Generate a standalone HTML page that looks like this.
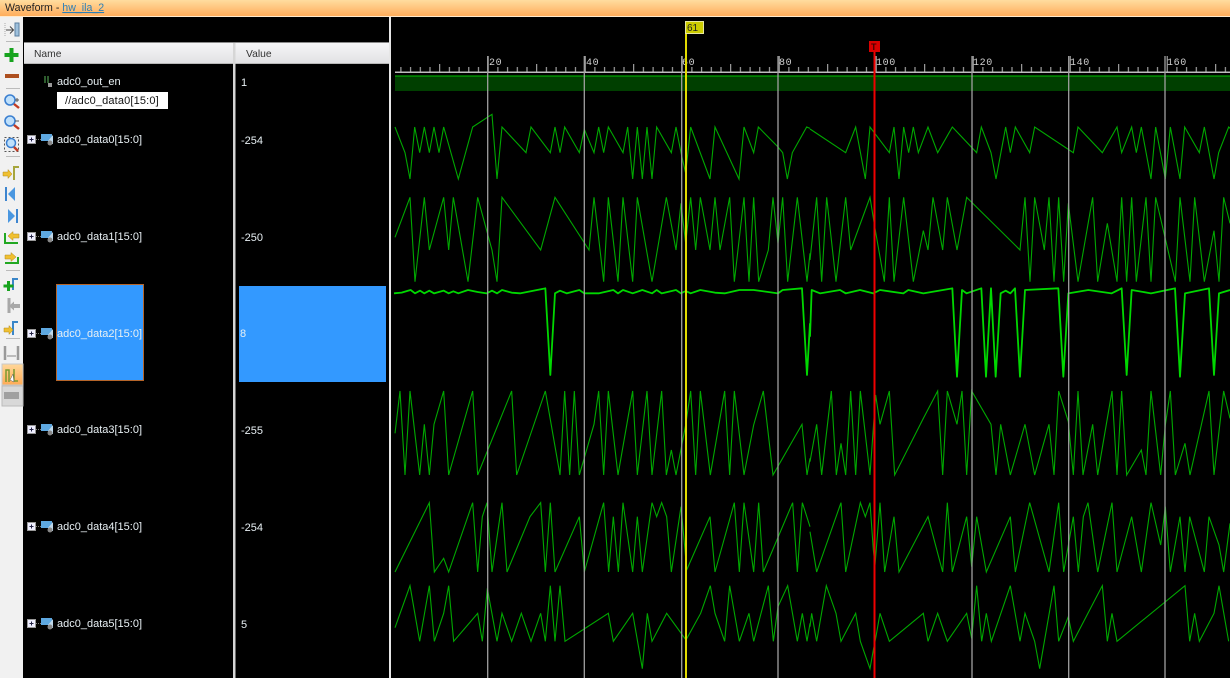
<!DOCTYPE html>
<html><head><meta charset="utf-8"><title>Waveform</title>
<style>
html,body{margin:0;padding:0;background:#000;width:1230px;height:678px;overflow:hidden}
svg{display:block}
text{font-family:"Liberation Sans",sans-serif;font-size:11px;fill:#e8f0f4}
.w polyline{fill:none;stroke:#00a800;stroke-width:1.1;vector-effect:non-scaling-stroke;stroke-linejoin:miter}
.t polyline{fill:none;stroke:#00d800;stroke-width:1.8;vector-effect:non-scaling-stroke;stroke-linejoin:round}
.r text{font-family:"Liberation Mono",monospace;font-size:10px;fill:#d0d0d0;letter-spacing:.6px}
.g{stroke:#a0a0a0;stroke-width:1.3}
</style></head><body>
<svg width="1230" height="678" viewBox="0 0 1230 678" xmlns="http://www.w3.org/2000/svg">
<defs>
<linearGradient id="tb" x1="0" y1="0" x2="0" y2="1"><stop offset="0" stop-color="#ffdc9f"/><stop offset="1" stop-color="#ffad5c"/></linearGradient>
<linearGradient id="hd" x1="0" y1="0" x2="0" y2="1"><stop offset="0" stop-color="#f6f6f8"/><stop offset="1" stop-color="#e2e2e4"/></linearGradient>
<linearGradient id="ac" x1="0" y1="0" x2="0" y2="1"><stop offset="0" stop-color="#ffd79a"/><stop offset="1" stop-color="#ffab55"/></linearGradient>
<pattern id="tk" patternUnits="userSpaceOnUse" x="487.7" y="56" width="97" height="17">
<path d="M.5 0V17M10.2 11V17M19.9 11V17M29.6 11V17M39.3 11V17M49 8V17M58.7 11V17M68.4 11V17M78.1 11V17M87.8 11V17" stroke="#bdbdbd" stroke-width="1" fill="none"/>
</pattern>
</defs>
<rect width="1230" height="678" fill="#000"/>

<!-- title -->
<rect width="1230" height="16" fill="url(#tb)"/>
<rect y="16" width="1230" height="1" fill="#ffe9cc"/>
<text x="5" y="11" style="fill:#222;font-size:10.6px">Waveform - <tspan style="fill:#2a7fb8" text-decoration="underline">hw_ila_2</tspan></text>

<!-- left toolbar -->
<rect y="17" width="23" height="661" fill="#f1f1f1"/>
<g>
<rect x="15" y="23" width="4" height="13" fill="#9ec0dc" stroke="#5c7fa0"/>
<path d="M6 30h7M10 26.500l3.500 3.500-3.500 3.500" stroke="#444" fill="none"/>
<path d="M5 23v13" stroke="#aaa" stroke-dasharray="1 1"/>
<rect x="6" y="41" width="14" height="1" fill="#bbb"/>
<path d="M9.500 48h4v5h5v4h-5v5h-4v-5h-5v-4h5z" fill="#17a31e"/>
<rect x="5" y="74" width="14" height="4" fill="#ad4f1f"/>
<rect x="6" y="88" width="14" height="1" fill="#bbb"/>
<circle cx="10" cy="100" r="5" fill="#bfe0fb" stroke="#3b7fd0" stroke-width="1.600"/><path d="M14 104l5 4" stroke="#c23a22" stroke-width="2.400"/>
<path d="M15 100h4M17 98v4" stroke="#555"/>
<circle cx="10" cy="121" r="5" fill="#bfe0fb" stroke="#3b7fd0" stroke-width="1.600"/><path d="M14 125l5 4" stroke="#c23a22" stroke-width="2.400"/><path d="M15 121h4" stroke="#555"/>
<rect x="4.500" y="137.500" width="14" height="14" fill="#eee" stroke="#555" stroke-dasharray="2 2"/>
<circle cx="11" cy="143" r="4.500" fill="#bfe0fb" stroke="#3b7fd0" stroke-width="1.500"/><path d="M14 147l4 4" stroke="#c23a22" stroke-width="2.400"/>
<rect x="6" y="156" width="14" height="1" fill="#bbb"/>
<path d="M14 180v-13h5" stroke="#a6a53c" stroke-width="2" fill="none"/><path d="M3 172h5v-2.500l4 4.500-4 4.500v-2.500h-5z" fill="#f0c030" stroke="#b08a20" stroke-width=".5"/>
<rect x="5" y="187" width="2" height="14" fill="#3d85cf"/><path d="M15 187v14l-7-7z" fill="#4a97e0"/>
<rect x="16" y="209" width="2" height="14" fill="#3d85cf"/><path d="M8 209v14l7-7z" fill="#4a97e0"/>
<path d="M5 233v10h13" stroke="#22a822" stroke-width="2" fill="none"/><path d="M19 234h-6v-2.500l-5 4.500 5 4.500v-2.500h6z" fill="#f0c030" stroke="#b08a20" stroke-width=".5"/>
<path d="M5 263h13v-6" stroke="#22a822" stroke-width="2" fill="none"/><path d="M5 255h6v-2.500l5 4.500-5 4.500v-2.500h-6z" fill="#f0c030" stroke="#b08a20" stroke-width=".5"/>
<rect x="6" y="270" width="14" height="1" fill="#bbb"/>
<path d="M13 290v-11h5" stroke="#3a86c8" stroke-width="2" fill="none"/><path d="M7 281h3v3.500h3.500v3h-3.500v3.500h-3v-3.500h-3.500v-3h3.500z" fill="#17a31e"/>
<path d="M9 298v15" stroke="#a8a8a8" stroke-width="3" fill="none"/><path d="M20 304h-6v-2.500l-5 4.500 5 4.500v-2.500h6z" fill="#a8a8a8"/>
<path d="M13 335v-13h5" stroke="#3a86c8" stroke-width="2" fill="none"/><path d="M4 328h5v-2.500l4 4.500-4 4.500v-2.500h-5z" fill="#f0c030" stroke="#b08a20" stroke-width=".5"/>
<rect x="6" y="338" width="14" height="1" fill="#bbb"/>
<path d="M5 346v14M18 346v14" stroke="#9a9a9a" stroke-width="2.500"/><path d="M7 356h9" stroke="#888"/>
<rect x="2" y="364" width="21" height="21" fill="url(#ac)" stroke="#c9c9c9"/>
<path d="M6 382v-12h3v12M14 369v12h4" stroke="#7a9a30" stroke-width="1.500" fill="none"/><path d="M10 380l3-6 1 8z" fill="#fff" stroke="#555" stroke-width=".5"/>
<rect x="2" y="386" width="21" height="20" fill="#d8d8d8" stroke="#bbb"/>
<rect x="4" y="392" width="15" height="7" fill="#a0a0a0"/>
</g>

<!-- column headers -->
<rect x="24" y="42" width="366" height="1" fill="#8a8a8a"/>
<rect x="24" y="43" width="366" height="20" fill="url(#hd)"/>
<rect x="24" y="63" width="366" height="1" fill="#b8b8b8"/>
<rect x="233" y="43" width="2.500" height="635" fill="#d6d6d6"/>
<rect x="389" y="17" width="2" height="661" fill="#e6e6e6"/>
<text x="34" y="57" style="fill:#333;font-size:10.300px">Name</text>
<text x="246" y="57" style="fill:#333;font-size:10.300px">Value</text>

<!-- selections -->
<rect x="56.500" y="284.500" width="87" height="96" fill="#3399ff" stroke="#b5652a"/>
<rect x="239" y="286" width="147" height="96" fill="#3399ff"/>

<!-- names -->
<g>
<text x="57" y="85">adc0_out_en</text>
<text x="57" y="143">adc0_data0[15:0]</text>
<text x="57" y="240">adc0_data1[15:0]</text>
<text x="57" y="337">adc0_data2[15:0]</text>
<text x="57" y="433">adc0_data3[15:0]</text>
<text x="57" y="530">adc0_data4[15:0]</text>
<text x="57" y="627">adc0_data5[15:0]</text>
<text x="241" y="86">1</text>
<text x="241" y="144">-254</text>
<text x="241" y="241">-250</text>
<text x="240" y="337">8</text>
<text x="241" y="434">-255</text>
<text x="241" y="531">-254</text>
<text x="241" y="628">5</text>
</g>

<!-- expanders & bus icons -->
<g>
<path d="M45 76v7M48 76v7" stroke="#3d7a3d" stroke-width="1.500"/><rect x="48" y="83" width="4" height="4" fill="#999"/>
<g><rect x="27.500" y="135.500" width="8" height="8" fill="#eef" stroke="#999"/><path d="M29.500 139.500h4M31.500 137.500v4" stroke="#224"/><path d="M36 139.500h5" stroke="#777" stroke-dasharray="1 1"/><rect x="41" y="134" width="11" height="7" fill="#5ea8e0"/><path d="M48 141l5-6v9h-5z" fill="#bfd8ea"/><circle cx="50" cy="143" r="2.500" fill="#888"/></g>
<g transform="translate(0,97)"><rect x="27.500" y="135.500" width="8" height="8" fill="#eef" stroke="#999"/><path d="M29.500 139.500h4M31.500 137.500v4" stroke="#224"/><path d="M36 139.500h5" stroke="#777" stroke-dasharray="1 1"/><rect x="41" y="134" width="11" height="7" fill="#5ea8e0"/><path d="M48 141l5-6v9h-5z" fill="#bfd8ea"/><circle cx="50" cy="143" r="2.500" fill="#888"/></g>
<g transform="translate(0,194)"><rect x="27.500" y="135.500" width="8" height="8" fill="#eef" stroke="#999"/><path d="M29.500 139.500h4M31.500 137.500v4" stroke="#224"/><path d="M36 139.500h5" stroke="#777" stroke-dasharray="1 1"/><rect x="41" y="134" width="11" height="7" fill="#5ea8e0"/><path d="M48 141l5-6v9h-5z" fill="#bfd8ea"/><circle cx="50" cy="143" r="2.500" fill="#888"/></g>
<g transform="translate(0,290)"><rect x="27.500" y="135.500" width="8" height="8" fill="#eef" stroke="#999"/><path d="M29.500 139.500h4M31.500 137.500v4" stroke="#224"/><path d="M36 139.500h5" stroke="#777" stroke-dasharray="1 1"/><rect x="41" y="134" width="11" height="7" fill="#5ea8e0"/><path d="M48 141l5-6v9h-5z" fill="#bfd8ea"/><circle cx="50" cy="143" r="2.500" fill="#888"/></g>
<g transform="translate(0,387)"><rect x="27.500" y="135.500" width="8" height="8" fill="#eef" stroke="#999"/><path d="M29.500 139.500h4M31.500 137.500v4" stroke="#224"/><path d="M36 139.500h5" stroke="#777" stroke-dasharray="1 1"/><rect x="41" y="134" width="11" height="7" fill="#5ea8e0"/><path d="M48 141l5-6v9h-5z" fill="#bfd8ea"/><circle cx="50" cy="143" r="2.500" fill="#888"/></g>
<g transform="translate(0,484)"><rect x="27.500" y="135.500" width="8" height="8" fill="#eef" stroke="#999"/><path d="M29.500 139.500h4M31.500 137.500v4" stroke="#224"/><path d="M36 139.500h5" stroke="#777" stroke-dasharray="1 1"/><rect x="41" y="134" width="11" height="7" fill="#5ea8e0"/><path d="M48 141l5-6v9h-5z" fill="#bfd8ea"/><circle cx="50" cy="143" r="2.500" fill="#888"/></g>
</g>

<!-- tooltip -->
<rect x="57" y="92" width="111" height="17" fill="#fff"/>
<text x="65" y="104" style="fill:#111;letter-spacing:.15px">//adc0_data0[15:0]</text>

<!-- ruler -->
<rect x="395" y="56" width="835" height="17" fill="url(#tk)"/>
<rect x="395" y="71.500" width="835" height="1.500" fill="#bdbdbd"/>
<g class="r">
<text x="489" y="65">20</text><text x="586" y="65">40</text><text x="682" y="65">60</text><text x="779" y="65">80</text><text x="876" y="65">100</text><text x="973" y="65">120</text><text x="1070" y="65">140</text><text x="1167" y="65">160</text>
</g>

<!-- enable bar -->
<rect x="395" y="75" width="835" height="16" fill="#003f00"/>
<rect x="395" y="75.500" width="835" height="1.500" fill="#008000"/>

<!-- waveforms -->
<g class="w">
<g transform="translate(390,15) scale(.33333)">
<polyline points="15,336 45,413 60,492 74,336 89,413 103,336 118,413 132,336 147,413 161,336 205,492 248,336 306,298 321,492 336,336 408,413 423,336 481,413 495,336 510,413 524,336 568,413 583,343 612,413 626,336 641,413 655,336 699,413 713,336 728,492 742,336 757,492 771,336 786,492 800,336 844,413 858,336 873,413 887,475 902,336 960,492 975,336 1047,492 1062,336 1091,413 1105,336 1163,395 1178,413 1192,492 1207,413 1250,336 1260,340"/>
</g>
<g transform="translate(810,15) scale(.33333)">
<polyline points="0,342 107,413 137,336 166,492 180,336 238,413 252,336 267,492 281,336 296,413 310,336 325,413 354,336 383,413 427,336 500,413 514,336 543,413 558,492 587,336 601,413 616,336 659,413 674,336 790,413 804,336 877,413 921,336 935,413 965,336 979,413 994,336 1023,492 1037,336 1066,492 1081,336 1110,492 1124,336 1168,413 1183,336 1212,492 1226,413 1256,336 1260,340"/>
</g>
<g transform="translate(390,190) scale(.33333)">
<polyline points="15,142 60,22 75,275 103,22 118,180 161,22 176,180 190,22 234,275 263,22 306,180 321,275 336,22 452,180 495,22 597,180 612,22 641,275 655,22 684,275 699,22 728,275 742,22 786,275 829,22 858,180 873,40 887,160 902,22 917,180 931,22 960,180 975,22 990,180 1019,22 1033,275 1062,22 1077,275 1091,22 1106,275 1135,180 1149,22 1164,160 1178,22 1193,275 1222,22 1251,275 1260,190"/>
</g>
<g transform="translate(810,190) scale(.33333)">
<polyline points="0,210 20,22 35,275 50,22 78,275 107,22 122,180 180,22 195,115 223,275 238,22 252,275 281,22 310,275 340,122 354,180 369,22 398,180 412,22 441,180 470,22 630,180 645,22 660,275 674,22 703,180 717,22 732,275 746,22 761,275 775,40 804,275 848,22 863,275 892,100 921,275 935,22 950,275 965,22 979,275 1008,22 1023,275 1037,22 1096,275 1110,22 1140,275 1154,22 1183,275 1212,122 1227,275 1241,22 1260,100"/>
</g>
<g transform="translate(390,385) scale(.33333)">
<polyline points="15,145 30,18 45,270 60,18 89,270 103,118 118,270 132,118 161,18 176,270 248,18 263,270 365,18 380,270 466,18 510,270 524,18 539,270 553,18 568,270 612,118 626,18 641,270 655,18 684,270 728,18 742,270 771,18 786,270 815,18 829,270 844,195 858,270 887,120 902,18 917,270 931,18 961,270 1004,18 1019,270 1033,18 1062,270 1091,120 1120,18 1149,270 1236,118 1251,270 1260,220"/>
</g>
<g transform="translate(810,385) scale(.33333)">
<polyline points="0,230 20,118 35,270 64,18 79,270 93,175 107,270 122,18 137,270 151,18 180,270 197,30 210,118 238,18 254,270 340,100 383,18 398,270 412,18 441,118 456,18 470,270 485,18 543,118 558,270 572,118 601,270 645,118 674,270 717,118 732,270 746,18 775,110 790,270 804,18 819,270 848,118 863,270 906,18 921,270 935,18 950,270 994,195 1008,270 1023,18 1052,270 1066,120 1081,18 1096,270 1125,175 1140,270 1197,18 1212,270 1241,18 1260,100"/>
</g>
<g transform="translate(390,490) scale(.33333)">
<polyline points="15,246 118,38 133,246 161,205 176,246 248,38 263,246 277,80 291,38 306,246 336,38 351,246 420,80 452,38 466,246 481,38 495,246 568,80 583,246 641,38 656,246 670,80 685,246 699,38 728,246 742,80 757,246 786,38 800,80 815,38 830,80 844,246 873,50 885,180 890,240 960,80 975,246 1033,38 1048,246 1062,38 1091,246 1106,38 1120,246 1208,38 1222,246 1237,38 1260,110"/>
<polyline points="15,413 60,287 89,454 118,287 133,454 161,370 176,287 191,454 263,370 277,454 292,295 321,454 336,370 365,454 394,370 423,454 452,370 466,454 481,287 495,454 510,287 525,454 655,370 670,454 728,370 757,536 772,370 786,454 830,370 888,450 932,370 961,287 975,370 1004,454 1019,287 1048,454 1077,370 1091,454 1135,287 1150,454 1164,350 1193,287 1222,454 1237,370 1251,454 1260,400"/>
</g>
<g transform="translate(810,490) scale(.33333)">
<polyline points="0,125 20,246 93,38 107,246 151,38 166,80 180,38 190,180 195,225 210,38 224,246 252,80 267,246 354,80 398,246 412,38 427,246 470,80 485,230 500,80 529,246 601,80 616,246 659,38 717,246 746,38 761,246 790,80 805,246 820,80 834,38 863,246 906,38 921,246 965,80 994,246 1023,38 1052,165 1066,50 1081,246 1110,80 1125,246 1139,80 1183,246 1197,80 1227,165 1241,246 1260,100"/>
<polyline points="0,410 5,370 20,454 49,287 78,370 93,454 137,370 151,454 180,536 190,480 197,445 210,370 238,454 340,370 354,454 383,370 412,454 470,370 485,445 500,287 515,454 529,370 544,454 601,287 630,454 645,370 674,454 689,536 732,287 746,454 775,380 790,454 877,287 892,454 906,370 921,454 1125,287 1139,454 1154,370 1168,454 1212,370 1227,287 1256,454"/>
</g>
</g>
<g class="t">
<g transform="translate(390,190) scale(.33333)">
<polyline points="12,310 35,308 55,302 62,300 75,310 90,302 103,310 118,302 132,310 161,302 176,310 190,304 205,310 234,300 263,306 290,310 306,302 321,310 336,300 365,308 390,310 466,295 481,555 495,310 510,302 530,310 568,300 583,310 626,310 670,300 684,310 699,300 728,310 757,300 786,310 800,300 815,310 858,300 873,310 887,303 902,310 931,300 975,308 1004,310 1048,300 1091,300 1164,310 1178,300 1236,295 1251,555 1260,400"/>
</g>
<g transform="translate(810,190) scale(.33333)">
<polyline points="0,440 5,300 30,310 90,300 107,310 150,300 190,310 210,300 280,310 295,300 340,310 427,295 441,560 456,300 470,310 514,295 528,560 543,295 557,560 572,310 587,302 601,310 615,295 630,560 645,300 745,295 760,560 775,310 835,300 905,310 935,295 950,555 965,300 1023,310 1095,295 1110,560 1125,310 1197,295 1212,555 1227,310 1260,300"/>
</g>
</g>

<!-- grid -->
<g class="g">
<path d="M487.700 56V678M584.300 56V678M681.700 56V678M778 56V678M972 56V678M1068.700 56V678M1165 56V678M875.500 56V73"/>
</g>

<!-- markers -->
<rect x="685" y="22" width="2" height="656" fill="#e2da00"/>
<rect x="685.500" y="21.500" width="18" height="12" fill="#cccc00" stroke="#e8e8a0"/>
<text x="687" y="31" style="fill:#222;font-size:10px">61</text>
<rect x="873.500" y="52" width="2" height="626" fill="#f00000"/>
<rect x="869" y="41" width="11" height="11" fill="#d80000"/>
<text x="871" y="50" style="fill:#400;font-size:9px;font-weight:bold">T</text>
</svg>
</body></html>
